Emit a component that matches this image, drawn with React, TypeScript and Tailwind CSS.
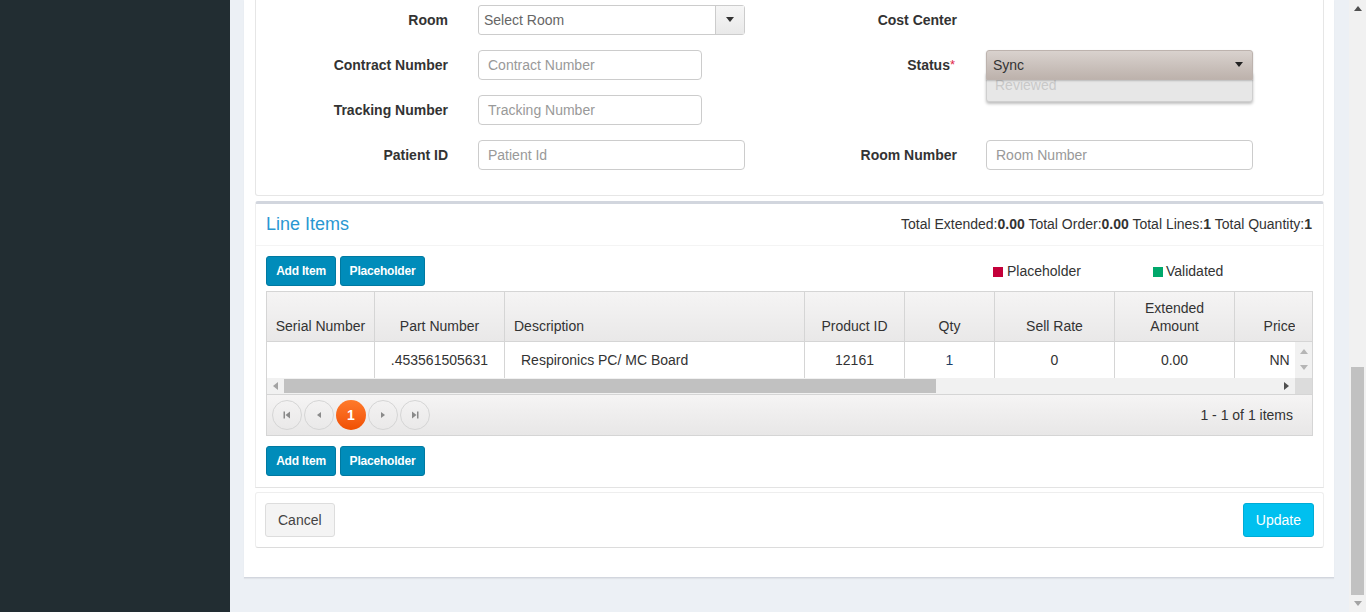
import React from "react";

const font = { fontFamily: "'Liberation Sans', Arial, sans-serif" };

type Col = { key: string; label: React.ReactNode; width: number; align: "center" | "left"; value: string; valueClass?: string };

const columns: Col[] = [
    { key: "serial", label: "Serial Number", width: 108, align: "center", value: "" },
    { key: "part", label: "Part Number", width: 130, align: "center", value: ".453561505631" },
    { key: "desc", label: "Description", width: 300, align: "left", value: "Respironics PC/ MC Board" },
    { key: "product", label: "Product ID", width: 100, align: "center", value: "12161" },
    { key: "qty", label: "Qty", width: 90, align: "center", value: "1", valueClass: "text-[#1f3f66]" },
    { key: "sell", label: "Sell Rate", width: 120, align: "center", value: "0" },
    {
        key: "ext",
        label: (
            <>
                Extended
                <br />
                Amount
            </>
        ),
        width: 120,
        align: "center",
        value: "0.00",
    },
    { key: "price", label: "Price", width: 90, align: "center", value: "NN" },
];

const FormLabel = ({ children, className = "" }: { children: React.ReactNode; className?: string }) => (
    <div className={`w-[192px] shrink-0 text-right text-[14px] font-bold text-[#333] ${className}`}>{children}</div>
);

const TextInput = ({ placeholder, width }: { placeholder: string; width: string }) => (
    <div
        className={`${width} h-[30px] border border-[#ccc] rounded-[4px] bg-white flex items-center px-[9px] text-[14px] text-[#999]`}
    >
        {placeholder}
    </div>
);

const BlueBtn = ({ children, width }: { children: React.ReactNode; width: string }) => (
    <button
        className={`${width} h-[30px] rounded-[3px] bg-[#008cba] border border-[#0079a1] text-white text-[12px] font-bold tracking-[-0.2px]`}
    >
        {children}
    </button>
);

const Tri = ({ dir, className }: { dir: "up" | "down" | "left" | "right"; className: string }) => {
    const pts = {
        up: "0,6 4,1 8,6",
        down: "0,1 4,6 8,1",
        left: "6,0 1,4 6,8",
        right: "1,0 6,4 1,8",
    }[dir];
    return (
        <svg width="8" height="8" viewBox="0 0 8 8" className={className}>
            <polygon points={pts} fill="currentColor" />
        </svg>
    );
};

const PagerBtn = ({ kind }: { kind: "first" | "prev" | "next" | "last" }) => (
    <div className="w-[30px] h-[30px] rounded-full border border-[#d5d5d5] flex items-center justify-center text-[#8a8a8a]">
        <svg width="10" height="10" viewBox="0 0 10 10">
            {kind === "first" && (
                <>
                    <rect x="1.5" y="1.5" width="1.5" height="7" fill="currentColor" />
                    <polygon points="8,1.5 3.5,5 8,8.5" fill="currentColor" />
                </>
            )}
            {kind === "prev" && <polygon points="7,2 3,5 7,8" fill="currentColor" />}
            {kind === "next" && <polygon points="3,2 7,5 3,8" fill="currentColor" />}
            {kind === "last" && (
                <>
                    <polygon points="2,1.5 6.5,5 2,8.5" fill="currentColor" />
                    <rect x="7" y="1.5" width="1.5" height="7" fill="currentColor" />
                </>
            )}
        </svg>
    </div>
);

const LineItemsGrid = () => (
    <div className="w-[1047px] border border-[#d5d5d5] text-[14px] text-[#333]">
        {/* header */}
        <div className="flex h-[50px] bg-gradient-to-b from-[#f5f4f4] to-[#e9e8e8] border-b border-[#d5d5d5]">
            <div className="w-[1029px] overflow-hidden flex">
                {columns.map((c) => (
                    <div
                        key={c.key}
                        style={{ width: c.width }}
                        className={`shrink-0 h-full border-r border-[#d5d5d5] flex items-end pb-[6px] leading-[18px] ${
                            c.align === "center" ? "justify-center text-center" : "pl-[9px]"
                        }`}
                    >
                        <span>{c.label}</span>
                    </div>
                ))}
            </div>
            <div className="w-[17px]" />
        </div>
        {/* row */}
        <div className="flex h-[36px] bg-white">
            <div className="w-[1029px] overflow-hidden flex">
                {columns.map((c) => (
                    <div
                        key={c.key}
                        style={{ width: c.width }}
                        className={`shrink-0 h-full border-r border-[#d5d5d5] flex items-center ${
                            c.align === "center" ? "justify-center" : "pl-[16px]"
                        } ${c.valueClass ?? ""}`}
                    >
                        {c.value}
                    </div>
                ))}
            </div>
            <div className="w-[17px] bg-[#f1f1f1] flex flex-col items-center justify-center gap-[8px] text-[#b5b5b5]">
                <Tri dir="up" className="" />
                <Tri dir="down" className="" />
            </div>
        </div>
        {/* horizontal scrollbar */}
        <div className="flex h-[17px] border-b border-[#d5d5d5]">
            <div className="w-[1029px] bg-[#f1f1f1] flex items-center">
                <div className="w-[17px] flex justify-center text-[#a3a3a3]">
                    <Tri dir="left" className="" />
                </div>
                <div className="w-[652px] h-[14px] bg-[#c1c1c1]" />
                <div className="flex-1" />
                <div className="w-[17px] flex justify-center text-[#505050]">
                    <Tri dir="right" className="" />
                </div>
            </div>
            <div className="w-[17px] bg-[#dcdcdc]" />
        </div>
        {/* pager */}
        <div className="h-[40px] bg-gradient-to-b from-[#f5f4f4] to-[#e8e7e7] flex items-center pl-[5px] pr-[19px]">
            <div className="flex items-center gap-[2px]">
                <PagerBtn kind="first" />
                <PagerBtn kind="prev" />
                <div className="w-[30px] h-[30px] rounded-full bg-gradient-to-b from-[#ff7a2a] to-[#f04f00] flex items-center justify-center text-white text-[14px] font-bold">
                    1
                </div>
                <PagerBtn kind="next" />
                <PagerBtn kind="last" />
            </div>
            <div className="ml-auto text-[14px] text-[#333]">1 - 1 of 1 items</div>
        </div>
    </div>
);

export default function App() {
    return (
        <div style={font} className="flex h-[612px] w-[1366px] overflow-hidden bg-[#ecf0f5]">
            {/* sidebar */}
            <div className="w-[230px] shrink-0 bg-[#222d32]" />

            {/* content */}
            <div className="flex-1 pl-[14px] pr-[15px]">
                <div className="bg-white pl-[11px] pr-[10px] pb-[29px] border-b border-[#d2d6de] shadow-[0_1px_1px_rgba(0,0,0,0.05)]">
                    {/* form card */}
                    <div className="border-x border-b border-[#e6e6e6] rounded-b-[3px] pt-[5px] pb-[25px] flex flex-col gap-[15px]">
                        <div className="flex items-center">
                            <div className="w-[509px] flex items-center">
                                <FormLabel>Room</FormLabel>
                                <div className="ml-[30px] w-[267px] h-[30px] border border-[#ccc] rounded-[3px] flex bg-white">
                                    <div className="flex-1 flex items-center pl-[5px] text-[14px] text-[#666]">Select Room</div>
                                    <div className="w-[29px] border-l border-[#ccc] bg-gradient-to-b from-[#f6f6f6] to-[#e9e9e9] flex items-center justify-center text-[#333]">
                                        <Tri dir="down" className="w-[8px] h-[8px]" />
                                    </div>
                                </div>
                            </div>
                            <div className="flex items-center">
                                <FormLabel>Cost Center</FormLabel>
                            </div>
                        </div>

                        <div className="flex items-center">
                            <div className="w-[509px] flex items-center">
                                <FormLabel>Contract Number</FormLabel>
                                <div className="ml-[30px]">
                                    <TextInput placeholder="Contract Number" width="w-[224px]" />
                                </div>
                            </div>
                            <div className="flex items-center">
                                <FormLabel className="pr-[2px]">
                                    Status<span className="text-[#e0264b] font-normal align-top text-[13px]">*</span>
                                </FormLabel>
                                <div className="ml-[29px] relative w-[267px] h-[30px]">
                                    <div className="absolute left-0 right-0 top-[22px] h-[30px] bg-[#e7e7e7] border border-[#cfcfcf] rounded-b-[3px] shadow-[0_2px_3px_rgba(0,0,0,0.25)] pl-[8px] pt-[1px] text-[14px] leading-[22px] text-[#c9c9c9]">
                                        Reviewed
                                    </div>
                                    <div className="absolute inset-0 z-10 rounded-t-[3px] border border-[#bdb3ae] bg-gradient-to-b from-[#d9d2ce] to-[#bdb2ac] flex items-center pl-[6px] pr-[9px] text-[14px] text-[#333] shadow-[0_1px_2px_rgba(0,0,0,0.2)]">
                                        <span>Sync</span>
                                        <Tri dir="down" className="ml-auto text-[#222]" />
                                    </div>
                                </div>
                            </div>
                        </div>

                        <div className="flex items-center">
                            <div className="w-[509px] flex items-center">
                                <FormLabel>Tracking Number</FormLabel>
                                <div className="ml-[30px]">
                                    <TextInput placeholder="Tracking Number" width="w-[224px]" />
                                </div>
                            </div>
                        </div>

                        <div className="flex items-center">
                            <div className="w-[509px] flex items-center">
                                <FormLabel>Patient ID</FormLabel>
                                <div className="ml-[30px]">
                                    <TextInput placeholder="Patient Id" width="w-[267px]" />
                                </div>
                            </div>
                            <div className="flex items-center">
                                <FormLabel>Room Number</FormLabel>
                                <div className="ml-[29px]">
                                    <TextInput placeholder="Room Number" width="w-[267px]" />
                                </div>
                            </div>
                        </div>
                    </div>

                    {/* line items card */}
                    <div className="mt-[5px] border-t-[3px] border-[#d2d6de] rounded-t-[3px] border-x border-b border-x-[#eeeeee] border-b-[#e3e3e3]">
                        <div className="h-[42px] flex items-center pl-[10px] pr-[11px] border-b border-[#f4f4f4]">
                            <div className="text-[18px] text-[#2a97d2]">Line Items</div>
                            <div className="ml-auto text-[14px] text-[#333]">
                                Total Extended:<b>0.00</b> Total Order:<b>0.00</b> Total Lines:<b>1</b> Total Quantity:<b>1</b>
                            </div>
                        </div>
                        <div className="px-[10px] pt-[10px] pb-[11px]">
                            <div className="flex items-center">
                                <div className="flex gap-[4px]">
                                    <BlueBtn width="w-[70px]">Add Item</BlueBtn>
                                    <BlueBtn width="w-[85px]">Placeholder</BlueBtn>
                                </div>
                                <div className="ml-auto flex text-[14px] text-[#333] pt-[1px]">
                                    <div className="w-[160px] flex items-center">
                                        <span className="w-[10px] h-[10px] bg-[#c4003a] mr-[4px]" />
                                        Placeholder
                                    </div>
                                    <div className="w-[160px] flex items-center">
                                        <span className="w-[10px] h-[10px] bg-[#00a86b] mr-[3px]" />
                                        Validated
                                    </div>
                                </div>
                            </div>
                            <div className="mt-[5px]">
                                <LineItemsGrid />
                            </div>
                            <div className="mt-[10px] flex gap-[4px]">
                                <BlueBtn width="w-[70px]">Add Item</BlueBtn>
                                <BlueBtn width="w-[85px]">Placeholder</BlueBtn>
                            </div>
                        </div>
                    </div>

                    {/* footer card */}
                    <div className="mt-[4px] border border-[#eeeeee] border-b-[#dcdcdc] rounded-[3px] py-[10px] pl-[9px] pr-[9px] flex items-center">
                        <button className="h-[34px] px-[12px] rounded-[3px] bg-[#f4f4f4] border border-[#ddd] text-[14px] text-[#444]">
                            Cancel
                        </button>
                        <button className="ml-auto h-[34px] px-[12px] rounded-[3px] bg-[#00c0ef] border border-[#00acd6] text-[14px] text-white">
                            Update
                        </button>
                    </div>
                </div>
            </div>

            {/* page scrollbar */}
            <div className="w-[17px] shrink-0 bg-[#f1f1f1] flex flex-col items-center">
                <div className="h-[17px] flex items-center justify-center text-[#505050]">
                    <Tri dir="up" className="" />
                </div>
                <div className="mt-[350px] w-[13px] h-[228px] bg-[#c1c1c1]" />
                <div className="mt-auto h-[17px] flex items-center justify-center text-[#a3a3a3]">
                    <Tri dir="down" className="" />
                </div>
            </div>
        </div>
    );
}
